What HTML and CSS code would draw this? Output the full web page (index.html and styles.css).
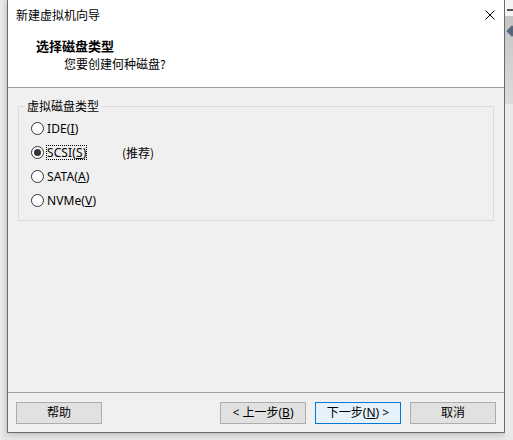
FILE: index.html
```html
<!DOCTYPE html>
<html lang="zh-CN">
<head>
    <meta charset="UTF-8">
    <meta name="viewport" content="width=device-width, initial-scale=1.0">
    <title>新建虚拟机向导</title>
    <link rel="stylesheet" href="styles.css">
</head>
<body>
    <div class="screen">
        <div class="gutter"></div>
        <div class="dialog">
            <div class="titlebar">
                <span class="caption">新建虚拟机向导</span>
                <svg class="close" width="10" height="10" viewBox="0 0 10 10">
                    <path d="M0.5 0.5 L9.5 9.5 M9.5 0.5 L0.5 9.5" stroke="#000" stroke-width="1" fill="none"/>
                </svg>
            </div>
            <div class="header">
                <div class="step-title">选择磁盘类型</div>
                <div class="step-sub">您要创建何种磁盘?</div>
            </div>
            <div class="content">
                <fieldset class="group">
                    <legend>虚拟磁盘类型</legend>
                    <div class="opt">
                        <span class="radio"></span>
                        <span class="label">IDE(<u>I</u>)</span>
                    </div>
                    <div class="opt">
                        <span class="radio on"></span>
                        <span class="label"><span class="focus">SCSI(<u>S</u>)</span></span>
                        <span class="note">(推荐)</span>
                    </div>
                    <div class="opt">
                        <span class="radio"></span>
                        <span class="label">SATA(<u>A</u>)</span>
                    </div>
                    <div class="opt">
                        <span class="radio"></span>
                        <span class="label">NVMe(<u>V</u>)</span>
                    </div>
                </fieldset>
            </div>
            <div class="footer">
                <button class="btn">帮助</button>
                <div class="spacer"></div>
                <button class="btn">&lt; 上一步(<u>B</u>)</button>
                <button class="btn default">下一步(<u>N</u>) &gt;</button>
                <button class="btn">取消</button>
            </div>
        </div>
        <div class="side">
            <div class="side-top"><span class="dash"></span></div>
            <div class="side-bar">
                <span class="diamond"></span>
            </div>
            <div class="side-rest"></div>
        </div>
    </div>
</body>
</html>
```

FILE: styles.css
```css
body {
    margin: 0;
    background: #e8e8e8;
    font-family: "Noto Sans", "Noto Sans CJK SC", sans-serif;
    font-size: 12px;
    color: #000;
}
.screen {
    display: flex;
    width: 513px;
    height: 440px;
    overflow: hidden;
}
.gutter {
    width: 7px;
    background: linear-gradient(to right, #ececec, #e2e2e2);
}
.dialog {
    width: 497px;
    height: 432px;
    border-left: 1px solid #6a6a6a;
    border-right: 1px solid #6a6a6a;
    border-bottom: 1px solid #6a6a6a;
    background: #f0f0f0;
    display: flex;
    flex-direction: column;
    box-shadow: 0 2px 6px rgba(0, 0, 0, 0.18);
}
.titlebar {
    height: 30px;
    background: #fff;
    display: flex;
    align-items: center;
    padding: 0 9px 0 8px;
}
.caption {
    flex: 1;
    font-family: "Noto Sans CJK SC", sans-serif;
    line-height: 16px;
    margin-top: -1px;
}
.close {
    display: block;
}
.header {
    height: 58px;
    box-sizing: border-box;
    background: #fff;
    border-bottom: 1px solid #a0a0a0;
    font-family: "Noto Sans CJK SC", sans-serif;
}
.step-title {
    font-weight: bold;
    font-size: 13px;
    line-height: 16px;
    padding: 8px 0 0 28px;
}
.step-sub {
    line-height: 16px;
    padding: 2px 0 0 56px;
}
.content {
    flex: 1;
    padding: 10px 10px 0 10px;
    border-bottom: 1px solid #a0a0a0;
}
.group {
    margin: 0;
    min-width: 0;
    border: 1px solid #dcdcdc;
    padding: 2px 0 8px 6px;
}
.group legend {
    font-family: "Noto Sans CJK SC", sans-serif;
    line-height: 16px;
    padding: 0 2px;
    color: #000;
}
.opt {
    display: flex;
    align-items: center;
    height: 24px;
    padding-left: 6px;
}
.radio {
    width: 13px;
    height: 13px;
    box-sizing: border-box;
    border: 1px solid #333;
    border-radius: 50%;
    background: #fff;
    display: flex;
    align-items: center;
    justify-content: center;
    margin-right: 3px;
}
.radio.on::after {
    content: "";
    width: 7px;
    height: 7px;
    border-radius: 50%;
    background: #333;
}
.label {
    line-height: 15px;
    letter-spacing: 0.1px;
}
.opt:nth-child(3) .label {
    width: 75px;
}
.focus {
    display: inline-block;
    border: 1px dotted #000;
    line-height: 13px;
    margin-left: -1px;
}
.note {
    font-family: "Noto Sans CJK SC", sans-serif;
}
u {
    text-underline-offset: 1px;
}
.footer {
    height: 39px;
    display: flex;
    align-items: flex-start;
    padding: 9px 8px 0 8px;
    box-sizing: border-box;
}
.spacer {
    flex: 1;
}
.btn {
    width: 86px;
    height: 22px;
    margin: 0;
    padding: 0;
    background: #e1e1e1;
    border: 1px solid #adadad;
    font-family: "Noto Sans", "Noto Sans CJK SC", sans-serif;
    font-size: 12px;
    color: #000;
    line-height: 18px;
}
.btn + .btn {
    margin-left: 9px;
}
.btn.default {
    background: #e5f1fb;
    border-color: #0078d7;
}
.side {
    width: 8px;
    display: flex;
    flex-direction: column;
}
.side-top {
    height: 16px;
    background: #f4f4f4;
    position: relative;
}
.dash {
    position: absolute;
    left: 2px;
    top: 9px;
    width: 6px;
    height: 2px;
    background: #555;
}
.side-bar {
    height: 88px;
    background: linear-gradient(#c4c4c4, #dcdcdc);
    position: relative;
}
.diamond {
    position: absolute;
    left: 3px;
    top: 11px;
    width: 8px;
    height: 8px;
    background: #56677a;
    transform: rotate(45deg);
}
.side-rest {
    flex: 1;
    background: #e9e9e9;
}
```
